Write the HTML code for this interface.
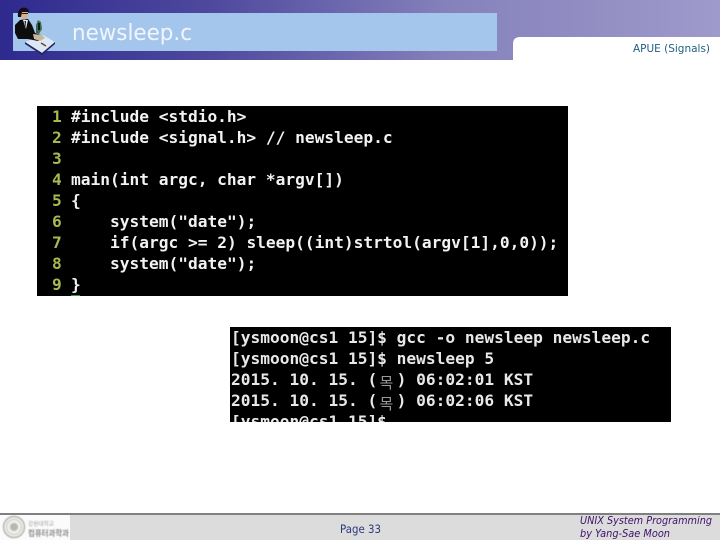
<!DOCTYPE html>
<html><head><meta charset="utf-8">
<style>
html,body{margin:0;padding:0;background:#fff;width:720px;height:540px;overflow:hidden}
svg{display:block;position:absolute;left:0;top:0}
.m{font-family:"DejaVu Sans Mono","Liberation Mono",monospace;font-weight:bold;font-size:16.2px}
.s{font-family:"DejaVu Sans",sans-serif}
</style></head><body>
<svg width="720" height="540" viewBox="0 0 720 540" xmlns="http://www.w3.org/2000/svg">
<defs>
<linearGradient id="h" x1="0" x2="1" y1="0" y2="0">
<stop offset="0" stop-color="#2e2a8e"/><stop offset=".3" stop-color="#4f4a9e"/><stop offset=".62" stop-color="#8581bb"/><stop offset="1" stop-color="#9e9acb"/>
</linearGradient>
<clipPath id="t"><rect x="230" y="327" width="441" height="95"/></clipPath>
<filter id="b" x="-5%" y="-5%" width="110%" height="110%"><feGaussianBlur stdDeviation=".35"/></filter>
<filter id="b2" x="-5%" y="-5%" width="110%" height="110%"><feGaussianBlur stdDeviation=".6"/></filter>
</defs>
<rect width="720" height="540" fill="#fff"/>
<rect width="720" height="60" fill="url(#h)"/>
<rect x="13" y="13" width="484" height="38" fill="#a4c6ec"/>
<path d="M513 60V44Q513 37 520 37H720V60Z" fill="#fff"/>
<text x="72" y="40" class="s" font-size="22" fill="#f2f6fc" textLength="120" lengthAdjust="spacingAndGlyphs">newsleep.c</text>
<text x="633" y="52" class="s" font-size="10.5" fill="#1f5f80" textLength="77" lengthAdjust="spacingAndGlyphs">APUE (Signals)</text>

<!-- figure icon -->
<g filter="url(#b)">
<path d="M25 42L43 35L55 42L42 53Z" fill="#dde7f6"/>
<path d="M25 42L42 53L55 42L55 44L42 55L25 44Z" fill="#24245e"/>
<path d="M20 20L28 19L32 25L35 33L41 35L44 38L38 41L28 39L18 39L15 33L15 25Z" fill="#08080f"/>
<path d="M33 34L42 35L45 38L40 41L34 39Z" fill="#c9b79c"/>
<path d="M36 33L36 25L38 20L41 22L42 29L39 34Z" fill="#3f6a50"/>
<path d="M38 23L40 23L40 30L38 30Z" fill="#0b1a12"/>
<path d="M23 20L28 20L26 29Z" fill="#e6eaf2"/>
<path d="M24.500 21L26 21L25.500 28Z" fill="#12121c"/>
<path d="M21 12L28 12L27.500 18L24 20L21.500 17Z" fill="#d9b08c"/>
<path d="M18 17Q17 8 24 7.500Q29 8 29 12L22 12L21 17Z" fill="#120c14"/>
<path d="M22 13.500H28" stroke="#1a1218" stroke-width="1"/>
<path d="M41 43L46 46" stroke="#6a4c1e" stroke-width="1.500"/>
</g>

<!-- code -->
<rect x="37" y="106" width="531" height="190" fill="#000"/>
<g class="m" fill="#a9b84f" filter="url(#b)">
<text x="52" y="122">1</text>
<text x="52" y="143">2</text>
<text x="52" y="164">3</text>
<text x="52" y="185">4</text>
<text x="52" y="206">5</text>
<text x="52" y="227">6</text>
<text x="52" y="248">7</text>
<text x="52" y="269">8</text>
<text x="52" y="290">9</text>
</g>
<g class="m" fill="#f2f2f2" filter="url(#b)">
<text x="71" y="122">#include &lt;stdio.h&gt;</text>
<text x="71" y="143">#include &lt;signal.h&gt; // newsleep.c</text>
<text x="71" y="185">main(int argc, char *argv[])</text>
<text x="71" y="206">{</text>
<text x="110" y="227">system("date");</text>
<text x="110" y="248">if(argc &gt;= 2) sleep((int)strtol(argv[1],0,0));</text>
<text x="110" y="269">system("date");</text>
<text x="71" y="290">}</text>
</g>
<rect x="71" y="295" width="9" height="1" fill="#2f9a3f"/>

<!-- terminal -->
<rect x="230" y="327" width="441" height="95" fill="#000"/>
<g clip-path="url(#t)">
<g class="m" fill="#e8e8e8" filter="url(#b)">
<text x="231" y="343">[ysmoon@cs1 15]$ gcc -o newsleep newsleep.c</text>
<text x="231" y="364">[ysmoon@cs1 15]$ newsleep 5</text>
<text x="231" y="385">2015. 10. 15. (&#160;&#160;) 06:02:01 KST</text>
<text x="231" y="406">2015. 10. 15. (&#160;&#160;) 06:02:06 KST</text>
<text x="231" y="427">[ysmoon@cs1 15]$</text>
</g>
<g font-family="'Noto Sans CJK KR',sans-serif" font-size="15" fill="#9a9a9a" filter="url(#b)">
<text x="379.500" y="388">목</text>
<text x="379.500" y="409">목</text>
</g>
</g>

<!-- footer -->
<rect y="513" width="720" height="27" fill="#dcdcdc"/>
<rect y="513" width="720" height="2" fill="#808080"/>
<rect y="515" width="70" height="25" fill="#fbfbfb"/>
<g filter="url(#b2)">
<circle cx="14" cy="527" r="10.500" fill="#eeeeea" stroke="#b4b4b0" stroke-width="1.500"/>
<circle cx="14" cy="527" r="7.500" fill="none" stroke="#c8c8c4" stroke-width="1"/>
<circle cx="14" cy="527" r="4" fill="#b8b8b2"/>
<text x="28" y="526" font-family="'Noto Sans CJK KR',sans-serif" font-size="6" fill="#a0a0a0" textLength="26" lengthAdjust="spacingAndGlyphs">강원대학교</text>
<text x="28" y="536" font-family="'Noto Sans CJK KR',sans-serif" font-size="8" font-weight="bold" fill="#8c8c8c" textLength="41" lengthAdjust="spacingAndGlyphs">컴퓨터과학과</text>
</g>
<text x="340" y="533" class="s" font-size="11.500" fill="#2c3a80" textLength="41" lengthAdjust="spacingAndGlyphs">Page 33</text>
<text x="580" y="524" class="s" font-size="10.500" font-style="italic" fill="#40106a" textLength="132" lengthAdjust="spacingAndGlyphs">UNIX System Programming</text>
<text x="580" y="537" class="s" font-size="10.500" font-style="italic" fill="#40106a" textLength="90" lengthAdjust="spacingAndGlyphs">by Yang-Sae Moon</text>
</svg>
</body></html>
